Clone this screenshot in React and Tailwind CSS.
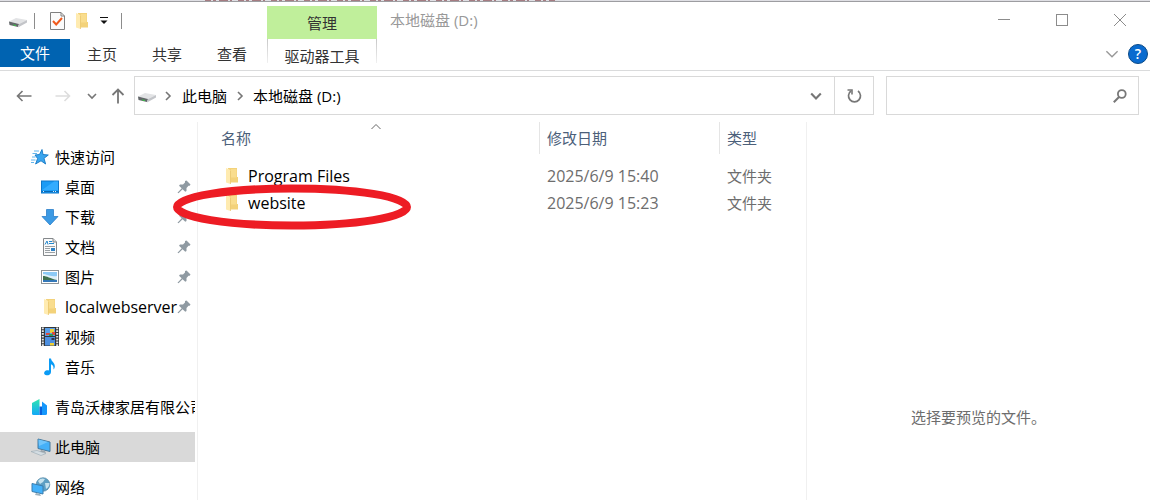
import React, { useState } from "react";

const DriveIcon = () => (
    <svg width="20" height="18" viewBox="0 0 20 18" className="shrink-0">
        <path d="M1 9.5 L8 6 L19 8 L11 12 Z" fill="#e2e3e5" />
        <path d="M1 9.5 L11 12 L10 15 L1.5 13 Z" fill="#63676a" />
        <path d="M11 12 L19 8 L19 10.5 L10 15.5 Z" fill="#c3c5c9" />
        <path d="M5 12.4 L8 13.1 V14 L5 13.3 Z" fill="#35d044" />
    </svg>
);

const FolderIcon = () => (
    <svg width="18" height="18" viewBox="0 0 18 18" className="shrink-0">
        <path d="M5 1 H14 V10 H15 V15.5 H6 Z" fill="#f3d27a" />
        <path d="M8 2 H13.5 V10.5 H8 Z" fill="#f9dd8e" />
        <path d="M3 1 L6.5 2.5 L7.5 4 V17 L3 15.5 Z" fill="#ffebb0" />
        <path d="M7.5 4 V17" stroke="#e8c468" strokeWidth="0.7" />
    </svg>
);

const StarIcon = () => (
    <svg width="18" height="18" viewBox="0 0 18 18" className="shrink-0">
        <path d="M11 1.5 L12 6.5 L17.3 7 L13 10.3 L14.6 16 L10 12.8 L4.6 16 L6.6 10.5 L4 7 L8.5 6.5 Z" fill="#3aa5ee" stroke="#1578c4" strokeWidth="0.9" />
        <path d="M3 3 H8 M1.5 5.5 H6 M1 9 H4.5 M0 12 H4.5 M0 14.5 H3" stroke="#63b5ec" />
    </svg>
);

const DesktopIcon = () => (
    <svg width="18" height="18" viewBox="0 0 18 18" className="shrink-0">
        <rect x="0.5" y="3" width="17" height="12" fill="#1b9bf5" stroke="#0f77c9" />
        <path d="M1 12 L13 3.5 H17 V12 Z" fill="#33acff" />
        <path d="M1 13.5 H17" stroke="#0868b4" />
        <path d="M2 13.5 H4 M12 13.5 H16" stroke="#d9efff" strokeDasharray="1 1" />
    </svg>
);

const DownloadIcon = () => (
    <svg width="18" height="18" viewBox="0 0 18 18" className="shrink-0">
        <path d="M5.5 1.5 H12.5 V8.5 H17 L9 17 L1 8.5 H5.5 Z" fill="#3c9ae4" stroke="#2b7fca" strokeWidth="0.8" />
    </svg>
);

const DocumentIcon = () => (
    <svg width="18" height="18" viewBox="0 0 18 18" className="shrink-0">
        <path d="M2.5 0.5 H12 L15.5 4 V17.5 H2.5 Z" fill="#fafafa" stroke="#84888b" />
        <path d="M12 0.5 V4 H15.5" fill="#ddd" stroke="#84888b" />
        <path d="M4 6.5 L6 3 L7 6.5 M8 3.5 H11 M8 5.5 H13" fill="none" stroke="#2388ce" />
        <path d="M4 8.5 H14 M4 10.5 H9 M4 12.5 H9 M4 14.5 H14" stroke="#9aa0a4" />
        <rect x="10" y="10" width="4" height="3" fill="#2f82c5" />
    </svg>
);

const PictureIcon = () => (
    <svg width="18" height="18" viewBox="0 0 18 18" className="shrink-0">
        <rect x="0.5" y="2.5" width="17" height="13" fill="#fff" stroke="#8e9498" />
        <rect x="2" y="4" width="14" height="10" fill="#8ccaf6" />
        <path d="M2 6 C6 6 8 9 16 8 V12 H2 Z" fill="#dff0fa" />
        <path d="M2 8 C6 8 9 10.5 16 12 H2 Z" fill="#3f7150" />
        <rect x="2" y="12" width="14" height="2" fill="#3478b8" />
    </svg>
);

const VideoIcon = () => (
    <svg width="18" height="20" viewBox="0 0 18 20" className="shrink-0">
        <rect width="18" height="19" fill="#33373b" />
        <path d="M1.8 0.5 V19 M16.2 0.5 V19" stroke="#e6e6e6" strokeWidth="2" strokeDasharray="1.7 1.1" />
        <rect x="4" y="1" width="10" height="8" fill="#5b9fe8" />
        <rect x="4" y="10" width="10" height="8.5" fill="#4d8fe0" />
        <rect x="9" y="2" width="4" height="4" fill="#e9cf3c" />
        <path d="M5 6 h4 v2 h-4 Z M11 5 h3 v3 h-3 Z" fill="#dc4a3d" />
        <path d="M8 7 h4 v2 h-4 Z" fill="#2f9c53" />
        <path d="M9 16 h4 v2.5 h-4 Z" fill="#f0cf35" />
        <path d="M10.5 11 h3 v2 h-3 Z" fill="#2c3550" />
    </svg>
);

const MusicIcon = () => (
    <svg width="18" height="18" viewBox="0 0 18 18" className="shrink-0">
        <path d="M8 0.5 H10 C10.5 4 14 4.5 13.8 8.5 C13.7 10 13 11 12.5 11.5 C12.8 8.5 12 7 10 6.2 V14 C10 16.5 7.5 17.5 5.5 17.3 C2.5 17 2.4 13.5 5 12.5 C6 12.1 7 12.1 8 12.5 Z" fill="#0a9bf5" />
    </svg>
);

const CompanyIcon = () => (
    <svg width="18" height="18" viewBox="0 0 18 18" className="shrink-0">
        <defs>
            <linearGradient id="tower" x1="0" y1="0" x2="0" y2="1">
                <stop offset="0" stopColor="#2fe5b0" />
                <stop offset="1" stopColor="#12a8f8" />
            </linearGradient>
        </defs>
        <path d="M1 5 L8.5 1 V17 H2.5 Q1 17 1 15.5 Z" fill="url(#tower)" />
        <path d="M11 3.5 L16 7.5 V15.5 Q16 17 14.5 17 H11 Z" fill="#1597fb" />
        <path d="M8.5 8.5 H11 V17 H8.5 Z" fill="#0861dc" />
    </svg>
);

const ComputerIcon = () => (
    <svg width="20" height="18" viewBox="0 0 20 18" className="shrink-0">
        <path d="M7 1 L19 4 V13.5 L7 10.5 Z" fill="#45b0f8" stroke="#47799c" />
        <path d="M7.5 1.5 L17 4 L8 8 Z" fill="#71c5fb" />
        <path d="M10 12 L14 13 L15 15 L9 14 Z" fill="#9aa3aa" />
        <path d="M0 13.5 L6 12.5 L15 15.5 L10 17.5 Z" fill="#d4dde3" stroke="#99a7b2" strokeWidth="0.6" />
    </svg>
);

const NetworkIcon = () => (
    <svg width="20" height="20" viewBox="0 0 20 20" className="shrink-0">
        <circle cx="12" cy="7.5" r="6.8" fill="#5d9fc3" stroke="#437b9b" strokeWidth="0.6" />
        <path d="M7 4 C9 1 12 1 14 2 L12 5 L9 7 Z M14 6 L18.5 6 C18.5 9 17 11 15 12 Z" fill="#c5e2ee" />
        <path d="M1 6.5 L12 9 V17 L1 14.5 Z" fill="#43b1fa" stroke="#3b7dad" />
        <path d="M5 16 L9 17 L10 19 L4 18 Z" fill="#9bb0bd" />
    </svg>
);

const PinIcon = () => (
    <svg width="14" height="14" viewBox="0 0 14 14" className="shrink-0">
        <path d="M8 1 L9.5 0.5 L13.5 4.5 L12.7 5.8 L11.5 5.8 L9.5 8 V11 L8.3 11.8 L5.6 9.2 L1.5 13.3 L0.5 12.8 L4.7 8.2 L2 5.7 L3 4.5 H6 L8 2.4 Z" fill="#8f9aa2" />
    </svg>
);

const Chevron = ({ d, className = "", size = 10, color = "#767676", width = 1.6 }) => (
    <svg width={size} height={size} viewBox="0 0 10 10" className={`shrink-0 ${className}`}>
        <path d={d} fill="none" stroke={color} strokeWidth={width} />
    </svg>
);

const DOWN = "M1 3 L5 7 L9 3";
const RIGHT = "M3 1 L7 5 L3 9";

const quickAccess = [
    { label: "桌面", icon: <DesktopIcon />, pinned: true },
    { label: "下载", icon: <DownloadIcon />, pinned: true },
    { label: "文档", icon: <DocumentIcon />, pinned: true },
    { label: "图片", icon: <PictureIcon />, pinned: true },
    { label: "localwebserver", icon: <FolderIcon />, pinned: true, latin: true },
    { label: "视频", icon: <VideoIcon /> },
    { label: "音乐", icon: <MusicIcon /> },
];

const roots = [
    { label: "青岛沃棣家居有限公司", icon: <CompanyIcon /> },
    { label: "此电脑", icon: <ComputerIcon /> },
    { label: "网络", icon: <NetworkIcon /> },
];

const files = [
    { name: "Program Files", date: "2025/6/9 15:40", type: "文件夹" },
    { name: "website", date: "2025/6/9 15:23", type: "文件夹" },
];

const TitleBar = () => (
    <header className="flex h-[37px] shrink-0 items-start">
        <div className="flex w-[267px] items-center pl-2 pt-2.5">
            <DriveIcon />
            <span className="ml-1.5 h-4 w-px bg-[#8c8c8c]" />
            <button aria-label="属性" className="ml-3.5">
                <svg width="18" height="18" viewBox="0 0 18 18">
                    <path d="M1.5 0.5 H12 L15.5 4 V17.5 H1.5 Z" fill="#fbfbfb" stroke="#808080" />
                    <path d="M12 0.5 V4 H15.5" fill="none" stroke="#808080" />
                    <path d="M4 9 L7.2 12.5 L13 6" fill="none" stroke="#f05a1c" strokeWidth="2" />
                </svg>
            </button>
            <button aria-label="新建文件夹" className="ml-1.5"><FolderIcon /></button>
            <button aria-label="自定义快速访问工具栏" className="ml-[9px]">
                <svg width="8" height="8" viewBox="0 0 8 8">
                    <path d="M0 0.5 H8" stroke="#111" />
                    <path d="M0.5 3.5 H7.5 L4 7 Z" fill="#111" />
                </svg>
            </button>
            <span className="ml-[13px] h-4 w-px bg-[#8c8c8c]" />
        </div>
        <div className="mt-1 flex h-[33px] w-[110px] items-center justify-center bg-[#c0ef9b] text-[#333]">管理</div>
        <h1 className="ml-[13px] pt-[7px] text-[#999]">本地磁盘 (D:)</h1>
        <div className="ml-auto flex gap-[46px] pr-6 pt-3">
            <button aria-label="最小化">
                <svg width="12" height="12" viewBox="0 0 12 12"><path d="M0 5.5 H12" stroke="#8c8c8c" /></svg>
            </button>
            <button aria-label="最大化">
                <svg width="12" height="12" viewBox="0 0 12 12"><rect x="0.5" y="0.5" width="11" height="11" fill="none" stroke="#8c8c8c" /></svg>
            </button>
            <button aria-label="关闭">
                <svg width="12" height="12" viewBox="0 0 12 12"><path d="M0 0 L12 12 M12 0 L0 12" stroke="#8c8c8c" /></svg>
            </button>
        </div>
    </header>
);

const Ribbon = () => (
    <nav className="flex h-8 shrink-0 items-start border-b border-[#dadbdc] text-[#333]">
        <button className="h-7 w-[70px] bg-[#0063b1] text-white">文件</button>
        <button className="h-7 w-16 pt-0.5">主页</button>
        <button className="h-7 w-[66px] pt-0.5">共享</button>
        <button className="h-7 w-16 pt-0.5">查看</button>
        <span className="w-[3px]" />
        <div className="flex h-6 w-[110px] bg-linear-to-b from-[#c8c8c8] to-[#f0f0f0] px-px">
            <button className="w-full bg-white pt-1.5 whitespace-nowrap">驱动器工具</button>
        </div>
        <div className="ml-auto flex items-center gap-[9px] pr-0.5 pt-[5px]">
            <button aria-label="展开功能区"><Chevron d={DOWN} size={14} color="#999" width={1} /></button>
            <button aria-label="帮助" className="h-5 w-5 rounded-full border border-[#0b4a87] bg-[#0a6bcf] text-center text-sm leading-[18px] font-semibold text-white">?</button>
        </div>
    </nav>
);

const AddressBar = () => (
    <div className="flex shrink-0 items-stretch pt-[5px] pr-[11px]">
        <div className="flex w-[134px] items-center pl-4">
            <button aria-label="后退">
                <svg width="16" height="12" viewBox="0 0 16 12"><path d="M15.5 6 H1.5 M6.5 1 L1.5 6 L6.5 11" fill="none" stroke="#777" strokeWidth="1.6" /></svg>
            </button>
            <button aria-label="前进" className="ml-[23px]">
                <svg width="16" height="12" viewBox="0 0 16 12"><path d="M0.5 6 H14.5 M9.5 1 L14.5 6 L9.5 11" fill="none" stroke="#ddd" strokeWidth="1.6" /></svg>
            </button>
            <button aria-label="最近浏览的位置" className="ml-4"><Chevron d={DOWN} /></button>
            <button aria-label="上移" className="ml-[14px]">
                <svg width="14" height="16" viewBox="0 0 14 16"><path d="M7 15.5 V1.5 M1.5 7 L7 1.5 L12.5 7" fill="none" stroke="#777" strokeWidth="1.8" /></svg>
            </button>
        </div>
        <div className="flex h-[39px] flex-1 items-center border border-[#d9d9d9] pl-0.5">
            <DriveIcon />
            <Chevron d={RIGHT} className="ml-[6px]" />
            <a href="#pc" className="ml-[9px]">此电脑</a>
            <Chevron d={RIGHT} className="ml-2" />
            <a href="#d" className="ml-2">本地磁盘 (D:)</a>
            <button aria-label="以前的位置" className="ml-auto mr-3"><Chevron d={DOWN} size={12} width={1.8} /></button>
            <button aria-label="刷新" className="flex h-full w-[39px] items-center justify-center border-l border-[#d9d9d9]">
                <svg width="16" height="16" viewBox="0 0 16 16">
                    <path d="M12 3 A6 6 0 1 1 5 3" fill="none" stroke="#777" strokeWidth="1.7" />
                    <path d="M1.5 2 H6 V6.5" fill="none" stroke="#777" strokeWidth="1.6" />
                </svg>
            </button>
        </div>
        <label className="ml-3 flex w-[253px] items-center border border-[#d9d9d9] pr-[11px]">
            <input type="text" aria-label="搜索" className="h-full min-w-0 flex-1 pl-2 outline-none" />
            <svg width="14" height="14" viewBox="0 0 14 14">
                <circle cx="8.8" cy="5" r="3.9" fill="none" stroke="#777" strokeWidth="1.8" />
                <path d="M6 8 L0.8 13.2" stroke="#777" strokeWidth="2" />
            </svg>
        </label>
    </div>
);

const Sidebar = ({ selected, onSelect }) => (
    <aside className="w-[195px] shrink-0 pt-[27px]">
        <button className="flex h-[30px] w-full items-center pl-[31px]">
            <span className="w-6 shrink-0"><StarIcon /></span>
            快速访问
        </button>
        <ul>
            {quickAccess.map(({ label, icon, pinned, latin }) => (
                <li key={label}>
                    <button className="flex h-[30px] w-full items-center pl-[41px] pr-1" onClick={() => onSelect(label)}>
                        <span className="w-6 shrink-0">{icon}</span>
                        <span className={`min-w-0 flex-1 text-left whitespace-nowrap ${latin ? "text-base" : ""}`}>{label}</span>
                        {pinned && <PinIcon />}
                    </button>
                </li>
            ))}
        </ul>
        {roots.map(({ label, icon }) => (
            <button
                key={label}
                className={`mt-2.5 flex h-[30px] w-full items-center overflow-hidden pl-[31px] ${selected === label ? "bg-[#d9d9d9]" : ""}`}
                onClick={() => onSelect(label)}
            >
                <span className="w-6 shrink-0">{icon}</span>
                <span className="whitespace-nowrap">{label}</span>
            </button>
        ))}
    </aside>
);

const FileList = () => (
    <section className="ml-0.5 mt-[7px] w-[610px] shrink-0 border-x border-[#f0f0f0] pl-[15px]">
        <table className="w-full table-fixed border-separate border-spacing-0 text-left">
            <thead className="text-[#4c607a]">
                <tr className="h-8">
                    <th className="relative w-[327px] border-r border-[#e5e5e5] pl-2 font-normal">
                        名称
                        <Chevron d="M0.5 7 L5 2.5 L9.5 7" color="#666" width={1} className="absolute top-0 left-1/2 -translate-x-1/2" />
                    </th>
                    <th className="w-[180px] border-r border-[#e5e5e5] pl-[7px] font-normal">修改日期</th>
                    <th className="pl-[7px] font-normal">类型</th>
                </tr>
            </thead>
            <tbody className="text-[#6d6d6d] before:block before:h-2 before:content-['']">
                {files.map(({ name, date, type }) => (
                    <tr key={name} className="h-[27px]">
                        <td className="pl-2.5 text-base leading-[22px] text-black">
                            <span className="flex items-center gap-[7px]"><FolderIcon /> {name}</span>
                        </td>
                        <td className="pl-[7px] text-base leading-[22px]">{date}</td>
                        <td className="pl-[7px]">{type}</td>
                    </tr>
                ))}
            </tbody>
        </table>
    </section>
);

export default function App() {
    const [selected, setSelected] = useState("此电脑");

    return (
        <div className="flex h-screen flex-col overflow-hidden bg-white font-['Open_Sans','Noto_Sans_CJK_SC',sans-serif] text-[15px] leading-[22px] text-black">
            <div className="h-0.5 shrink-0 border-b border-[#9d9da1] bg-[#dfdfe4]">
                <svg width="560" height="1" className="block">
                    <path d="M205 0.5 H555" stroke="#a57c82" strokeDasharray="6 2 3 3 9 2 2 6" />
                </svg>
            </div>
            <TitleBar />
            <Ribbon />
            <AddressBar />
            <main className="relative flex min-h-0 flex-1">
                <Sidebar selected={selected} onSelect={setSelected} />
                <FileList />
                <section className="flex-1 pt-[291px] text-center text-[#6d6d6d]">选择要预览的文件。</section>
                {/* highlight around the website folder */}
                <svg width="240" height="46" viewBox="0 0 240 46" className="pointer-events-none absolute top-[69px] left-[172px]">
                    <ellipse cx="120" cy="23" rx="115" ry="18.5" fill="none" stroke="#ed1c24" strokeWidth="8" />
                </svg>
            </main>
        </div>
    );
}
